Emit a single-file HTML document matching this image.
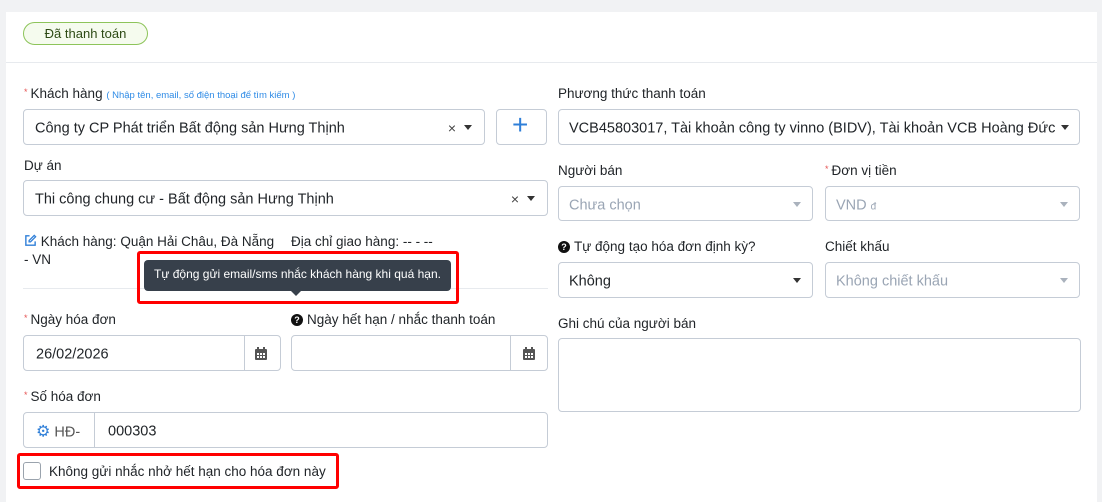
<!DOCTYPE html>
<html><head><meta charset="utf-8"><style>
*{box-sizing:border-box;margin:0;padding:0}
body{width:1102px;height:495px;background:#f1f2f4;font-family:"Liberation Sans",sans-serif;font-size:14px;color:#212529;position:relative;overflow:hidden}
.card{position:absolute;left:6px;top:12px;width:1091px;height:490px;background:#fff}
.a{position:absolute;white-space:nowrap}
.lbl{position:absolute;font-size:13.5px;color:#212529;white-space:nowrap}
.st{color:#e55353;font-size:9px;vertical-align:3px;margin-right:3px}
.box{position:absolute;border:1px solid #c5ccd6;border-radius:4px;background:#fff}
.txt{position:absolute;top:50%;transform:translateY(-42%);white-space:nowrap;font-size:14.5px}
.car{position:absolute;top:50%;margin-top:-2px;width:0;height:0;border-left:4.5px solid transparent;border-right:4.5px solid transparent;border-top:5px solid #333}
.car.l{border-top-color:#aab2bd}
.x{position:absolute;top:50%;transform:translateY(-45%);font-size:14px;color:#444}
.ph{color:#9aa5b4}
.q{display:inline-block;width:12px;height:12px;border-radius:50%;background:#111;color:#fff;font-size:9px;font-weight:bold;text-align:center;line-height:12px;margin-right:4px;vertical-align:1px}
</style></head><body>
<div class="card"></div>
<div class="a" style="left:23px;top:22px;width:125px;height:23px;border:1px solid #8dc45a;border-radius:12px;background:#f5fbee;text-align:center;line-height:21px;font-size:13px;color:#2d4a14">Đã thanh toán</div>
<div class="a" style="left:6px;top:62px;width:1091px;height:1px;background:#e7eaee"></div>

<div class="lbl" style="left:24px;top:86px"><span class="st">*</span>Khách hàng <span style="font-size:9.5px;color:#2f8be6">( Nhập tên, email, số điện thoại để tìm kiếm )</span></div>
<div class="box" style="left:23px;top:109px;width:462px;height:36px"><span class="txt" style="left:11px">Công ty CP Phát triển Bất động sản Hưng Thịnh</span><span class="x" style="right:28px">×</span><span class="car" style="right:12px"></span></div>
<div class="box" style="left:496px;top:109px;width:51px;height:36px"><span class="txt" style="left:15px;top:45%;font-size:28px;color:#2f7fd8;font-weight:300;transform:translateY(-50%)">+</span></div>

<div class="lbl" style="left:24px;top:158px">Dự án</div>
<div class="box" style="left:23px;top:180px;width:525px;height:36px"><span class="txt" style="left:11px">Thi công chung cư - Bất động sản Hưng Thịnh</span><span class="x" style="right:28px">×</span><span class="car" style="right:12px"></span></div>

<div class="a" style="left:24px;top:234px;font-size:13.5px"><svg width="13" height="13" viewBox="0 0 14 14" style="vertical-align:-1px"><path d="M6 2H2v10h10V8" fill="none" stroke="#2f7fd8" stroke-width="1.5"/><path d="M11 1.5l1.5 1.5L7 8.5H5.5V7z" fill="none" stroke="#2f7fd8" stroke-width="1.4"/></svg> Khách hàng: Quận Hải Châu, Đà Nẵng</div>
<div class="a" style="left:291px;top:234px;font-size:13.5px">Địa chỉ giao hàng: -- - --</div>
<div class="a" style="left:24px;top:252px;font-size:13.5px">- VN</div>
<div class="a" style="left:23px;top:288px;width:525px;height:1px;background:#e7eaee"></div>

<div class="a" style="left:137px;top:251px;width:322px;height:53px;border:3px solid #f00;border-radius:3px"></div>
<div class="a" style="left:144px;top:260px;width:307px;height:31px;background:#37404b;border-radius:4px;color:#fff;font-size:12px;text-align:center;line-height:28px">Tự động gửi email/sms nhắc khách hàng khi quá hạn.</div>
<div class="a" style="left:291px;top:291px;border-left:5px solid transparent;border-right:5px solid transparent;border-top:5px solid #37404b"></div>

<div class="lbl" style="left:24px;top:312px"><span class="st">*</span>Ngày hóa đơn</div>
<div class="box" style="left:23px;top:335px;width:258px;height:36px"><span class="txt" style="left:12px">26/02/2026</span><div class="a" style="left:220px;top:0;width:1px;height:34px;background:#c5ccd6"></div><svg class="a" style="left:231px;top:11px" width="12" height="13" viewBox="0 0 12 13"><rect x="0" y="2" width="12" height="11" rx="1" fill="#555"/><rect x="2" y="0" width="2" height="3" fill="#555"/><rect x="8" y="0" width="2" height="3" fill="#555"/><g fill="#fff"><rect x="2" y="6" width="2" height="2"/><rect x="5" y="6" width="2" height="2"/><rect x="8" y="6" width="2" height="2"/><rect x="2" y="9" width="2" height="2"/><rect x="5" y="9" width="2" height="2"/><rect x="8" y="9" width="2" height="2"/></g></svg></div>
<div class="lbl" style="left:291px;top:312px"><span class="q">?</span>Ngày hết hạn / nhắc thanh toán</div>
<div class="box" style="left:291px;top:335px;width:257px;height:36px"><div class="a" style="left:218px;top:0;width:1px;height:34px;background:#c5ccd6"></div><svg class="a" style="left:231px;top:11px" width="12" height="13" viewBox="0 0 12 13"><rect x="0" y="2" width="12" height="11" rx="1" fill="#555"/><rect x="2" y="0" width="2" height="3" fill="#555"/><rect x="8" y="0" width="2" height="3" fill="#555"/><g fill="#fff"><rect x="2" y="6" width="2" height="2"/><rect x="5" y="6" width="2" height="2"/><rect x="8" y="6" width="2" height="2"/><rect x="2" y="9" width="2" height="2"/><rect x="5" y="9" width="2" height="2"/><rect x="8" y="9" width="2" height="2"/></g></svg></div>

<div class="lbl" style="left:24px;top:389px"><span class="st">*</span>Số hóa đơn</div>
<div class="box" style="left:23px;top:412px;width:525px;height:36px"><span class="txt" style="left:12px;color:#555"><span style="color:#2f7fd8;font-size:16px">⚙</span> HĐ-</span><div class="a" style="left:70px;top:0;width:1px;height:34px;background:#c5ccd6"></div><span class="txt" style="left:84px">000303</span></div>

<div class="a" style="left:17px;top:453px;width:322px;height:36px;border:3px solid #f00;border-radius:3px"></div>
<div class="a" style="left:23px;top:462px;width:18px;height:18px;border:1px solid #9aa3ad;border-radius:3px;background:#fff"></div>
<div class="a" style="left:49px;top:464px;font-size:13.5px">Không gửi nhắc nhở hết hạn cho hóa đơn này</div>

<div class="lbl" style="left:558px;top:86px">Phương thức thanh toán</div>
<div class="box" style="left:558px;top:109px;width:522px;height:36px"><span class="txt" style="left:10px">VCB45803017, Tài khoản công ty vinno (BIDV), Tài khoản VCB Hoàng Đức</span><span class="car" style="right:10px"></span></div>

<div class="lbl" style="left:558px;top:163px">Người bán</div>
<div class="box" style="left:558px;top:186px;width:255px;height:35px"><span class="txt ph" style="left:10px">Chưa chọn</span><span class="car l" style="right:11px"></span></div>
<div class="lbl" style="left:825px;top:163px"><span class="st">*</span>Đơn vị tiền</div>
<div class="box" style="left:825px;top:186px;width:255px;height:35px"><span class="txt ph" style="left:10px">VND <span style="font-size:10px">đ</span></span><span class="car l" style="right:11px"></span></div>

<div class="lbl" style="left:558px;top:239px"><span class="q">?</span>Tự động tạo hóa đơn định kỳ?</div>
<div class="box" style="left:558px;top:262px;width:255px;height:36px"><span class="txt" style="left:10px">Không</span><span class="car" style="right:11px"></span></div>
<div class="lbl" style="left:825px;top:239px">Chiết khấu</div>
<div class="box" style="left:825px;top:262px;width:255px;height:36px"><span class="txt ph" style="left:10px">Không chiết khấu</span><span class="car l" style="right:11px"></span></div>

<div class="lbl" style="left:558px;top:316px">Ghi chú của người bán</div>
<div class="box" style="left:558px;top:338px;width:523px;height:74px"></div>
</body></html>
